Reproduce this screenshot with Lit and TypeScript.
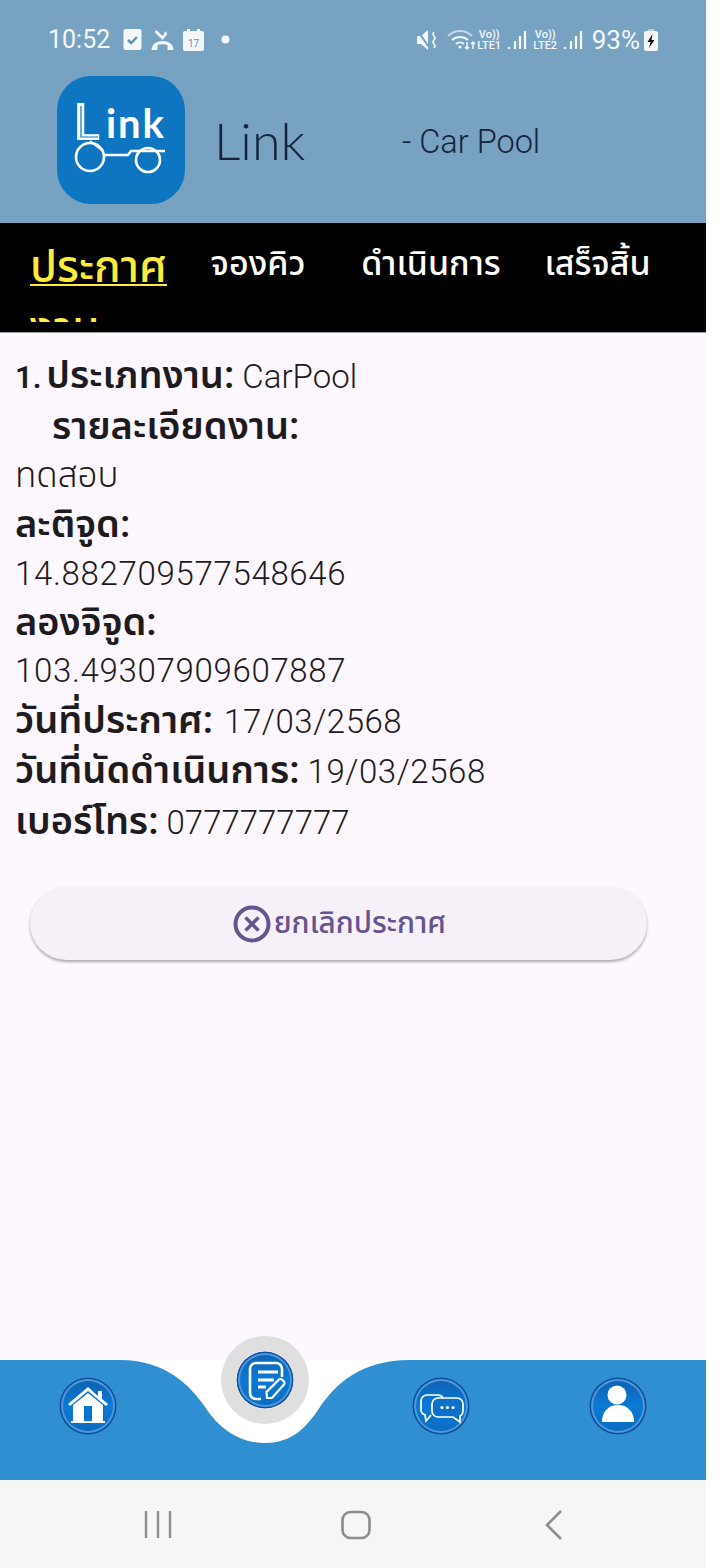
import { LitElement, html, svg, css } from "lit";
import { customElement } from "lit/decorators.js";

@customElement("app-root")
export class AppRoot extends LitElement {
  static styles = css`
    :host { display: block; width: 728px; height: 1568px; background: #fff; font-family: Roboto, "Noto Sans", "Noto Sans Thai", sans-serif; }
    .page { width: 706px; height: 1568px; display: flex; flex-direction: column; background: #fdf7ff; overflow: hidden; }
    .head { height: 223px; flex: none; background: #78a2c2; display: flex; flex-direction: column; }
    .status { height: 76px; flex: none; display: flex; align-items: center; padding: 3px 48px 0 48px; box-sizing: border-box; color: #f4f7fa; }
    .time { font-size: 25px; margin-right: 4px; font-weight: 400; }
    .sleft { display: flex; align-items: center; gap: 9px; }
    .sright { margin-left: auto; display: flex; align-items: center; }
    .pct { font-size: 26px; margin: 0 4px 0 9px; }
    .lte { display: flex; flex-direction: column; font-size: 11px; line-height: 11px; font-weight: 500; align-items: center; width: 27px; }
    .brand { display: flex; align-items: center; padding-left: 57px; }
    .logo { width: 128px; height: 128px; display: block; flex: none; }
    .name { font-size: 52px; font-weight: 300; color: #16233a; margin-left: 29px; width: 188px; font-family: Lato, Roboto, sans-serif; }
    .sub { font-size: 32.5px; font-weight: 300; color: #16233a; padding-top: 3px; }
    .tabs { height: 110px; flex: none; box-sizing: border-box; background: #000; border-bottom: 1px solid #999; display: grid; grid-template-columns: 180px 156px 190px 143px; font-weight: 500; color: #fff; font-size: 34px; }
    .tab { text-align: center; padding-top: 16px; height: 99px; overflow: hidden; box-sizing: border-box; line-height: 48px; }
    .tab.active { color: #ffeb3b; font-size: 44px; text-align: left; padding: 14px 0 0 30px; line-height: 61px; }
    .tab.active u { text-underline-offset: 2px; text-decoration-thickness: 2px; }
    main { flex: 1; padding: 17px 15px 0; color: #1d1b20; font-size: 33px; font-weight: 300; }
    .row { height: 49px; line-height: 49px; white-space: nowrap; }
    .row.first { height: 51px; line-height: 51px; }
    .row.second { height: 50px; line-height: 50px; }
    .row.short { height: 47.5px; line-height: 47.5px; }
    .row.tall { height: 50.5px; line-height: 50.5px; }
    b { font-weight: 600; font-size: 38px; }
    b .n { font-size: 31px; margin-right: -3px; }
    .th { font-size: 35px; }
    .num { letter-spacing: .68px; }
    .date { letter-spacing: .55px; }
    .date.m { margin-left: 3px; }
    .ind { padding-left: 37px; }
    .btn { margin: 41px 0 0 15px; width: 617px; height: 73px; border-radius: 37px; background: #f6f0f8; box-shadow: 0 2px 3px rgba(0,0,0,.32); display: flex; align-items: center; justify-content: center; gap: 3px; color: #65558f; font-size: 29.7px; font-weight: 500; padding-left: 2px; box-sizing: border-box; }
    .btn svg { width: 38px; height: 38px; display: block; }
    .dock { position: relative; height: 120px; flex: none; background: #fff; display: grid; grid-template-columns: repeat(4, 1fr); padding-top: 17px; box-sizing: border-box; justify-items: center; align-items: start; }
    .wave { position: absolute; left: 0; top: 0; width: 706px; height: 120px; }
    .ic { position: relative; width: 58px; height: 58px; display: block; }
    .ic.raised { margin-top: -26px; border-radius: 50%; box-shadow: 0 0 0 15px #dfdfdf; }
    .sys { height: 88px; flex: none; background: #f6f6f6; display: flex; align-items: center; }
    .sys svg { display: block; width: 706px; height: 88px; }
  `;

  private orb(inner: unknown, cls = "") {
    return html`<svg class="ic ${cls}" viewBox="0 0 58 58">
      <defs><linearGradient id="g" x1="0" y1="0" x2="0" y2="1"><stop offset="0" stop-color="#0e62b4"/><stop offset=".5" stop-color="#0a7ad6"/><stop offset="1" stop-color="#0c6cc2"/></linearGradient></defs>
      <circle cx="29" cy="29" r="28.5" fill="#0c4f9e"/>
      <circle cx="29" cy="29" r="27" fill="#4f97d8"/>
      <circle cx="29" cy="29" r="25" fill="url(#g)"/>
      ${inner}
    </svg>`;
  }

  render() {
    return html`<div class="page">
      <div class="head">
        <div class="status">
          <div class="sleft">
            <span class="time">10:52</span>
            <svg width="19" height="22" viewBox="0 0 18 22"><rect width="18" height="21" rx="2" fill="#f4f7fa"/><path d="M4.5 11l3.2 3 5.8-6" fill="none" stroke="#5f8fb0" stroke-width="2.4"/></svg>
            <svg width="23" height="22" viewBox="0 0 22 22"><path d="M4 2l7 7 4-5M15 4l-2 0" fill="none" stroke="#f4f7fa" stroke-width="2.6"/><path d="M0 21c0-12 22-12 22 0h-6v-5c-3-1-7-1-10 0v5z" fill="#f4f7fa"/></svg>
            <svg width="21" height="22" viewBox="0 0 21 22"><rect y="2" width="21" height="20" rx="2" fill="#f4f7fa"/><rect x="4" y="0" width="3" height="5" fill="#f4f7fa"/><rect x="14" y="0" width="3" height="5" fill="#f4f7fa"/><text x="10.5" y="18" font-size="10" text-anchor="middle" fill="#5f8fb0" font-family="Roboto">17</text></svg>
            <svg style="margin-left:8px" width="9" height="9" viewBox="0 0 9 9"><circle cx="4.5" cy="4.5" r="4" fill="#f4f7fa"/></svg>
          </div>
          <div class="sright">
            <svg width="22" height="22" viewBox="0 0 22 22"><path d="M1 7h4l7-6v20l-7-6H1z" fill="#f4f7fa"/><path d="M1 1l14 20" stroke="#78a2c2" stroke-width="2"/><path d="M18 3q-2 2 0 4t0 4 0 4 0 4" fill="none" stroke="#f4f7fa" stroke-width="1.6"/></svg>
            <svg style="margin-left:9px" width="29" height="22" viewBox="0 0 29 22"><path d="M1 7a17 17 0 0 1 24 0" fill="none" stroke="#c6d7e4" stroke-width="2"/><path d="M5 11a12 12 0 0 1 16 0M9 15a6 6 0 0 1 8 0" fill="none" stroke="#f4f7fa" stroke-width="2"/><circle cx="13" cy="18" r="1.6" fill="#f4f7fa"/><path d="M20 13v7m-2-2 2 2 2-2M26 20v-7m-2 2 2-2 2 2" fill="none" stroke="#f4f7fa" stroke-width="1.5"/></svg>
            <span class="lte"><span>Vo))</span><span>LTE1</span></span>
            <svg style="margin:0 0 0 4px" width="20" height="20" viewBox="0 0 20 20"><path d="M2 17v2M8 11v8M13 6v13M18 1v18" stroke="#f4f7fa" stroke-width="2.2"/></svg>
            <span class="lte" style="margin-left:5px"><span>Vo))</span><span>LTE2</span></span>
            <svg style="margin:0 0 0 4px" width="20" height="20" viewBox="0 0 20 20"><path d="M2 17v2M8 11v8M13 6v13M18 1v18" stroke="#f4f7fa" stroke-width="2.2"/></svg>
            <span class="pct">93%</span>
            <svg width="14" height="22" viewBox="0 0 14 22"><rect x="4" y="0" width="6" height="3" fill="#b9cddc"/><rect y="2" width="14" height="20" rx="2.5" fill="#f4f7fa"/><path d="M8.5 5 3.5 13h3l-1.5 6 5.5-8h-3z" fill="#111"/></svg>
          </div>
        </div>
        <div class="brand">
          <svg class="logo" viewBox="0 0 128 128">
            <rect width="128" height="128" rx="34" fill="#0e76c0"/>
            <text x="16" y="64" font-size="52" font-family="Lato, Roboto, sans-serif" font-weight="700" fill="#fff">L</text>
            <path d="M24 30v31h17" stroke="#0e76c0" stroke-width="1.2" fill="none"/>
            <text x="49" y="62" font-size="40" font-family="Lato, Roboto, sans-serif" font-weight="700" fill="#fff" textLength="58">ink</text>
            <path d="M33 65l13 10" stroke="#fff" stroke-width="2" fill="none"/>
            <circle cx="33" cy="81" r="14" fill="none" stroke="#fff" stroke-width="2.6"/>
            <circle cx="91" cy="84" r="12" fill="none" stroke="#fff" stroke-width="2.6"/>
            <path d="M47 79h24l3-4h34" stroke="#fff" stroke-width="2.6" fill="none"/>
          </svg>
          <span class="name">Link</span>
          <span class="sub">- Car Pool</span>
        </div>
      </div>
      <nav class="tabs">
        <div class="tab active"><u>ประกาศ</u><br />งาน</div>
        <div class="tab">จองคิว</div>
        <div class="tab">ดำเนินการ</div>
        <div class="tab">เสร็จสิ้น</div>
      </nav>
      <main>
        <div class="row first"><b><span class="n">1. </span>ประเภทงาน:</b> CarPool</div>
        <div class="row second"><b class="ind">รายละเอียดงาน:</b></div>
        <div class="row th">ทดสอบ</div>
        <div class="row"><b>ละติจูด:</b></div>
        <div class="row num">14.882709577548646</div>
        <div class="row"><b>ลองจิจูด:</b></div>
        <div class="row short num">103.49307909607887</div>
        <div class="row tall"><b>วันที่ประกาศ:</b> <span class="date m">17/03/2568</span></div>
        <div class="row tall"><b>วันที่นัดดำเนินการ:</b> <span class="date">19/03/2568</span></div>
        <div class="row tall"><b>เบอร์โทร:</b> 0777777777</div>
        <div class="btn">
          <svg viewBox="0 0 38 38"><circle cx="19" cy="19" r="16.5" fill="none" stroke="#65558f" stroke-width="4"/><path d="M12.5 12.5l13 13m0-13-13 13" stroke="#65558f" stroke-width="3.4"/></svg>
          <span>ยกเลิกประกาศ</span>
        </div>
      </main>
      <div class="dock">
        <svg class="wave" viewBox="0 0 706 120"><path d="M0 0H120C165 0 190 25 205 47C220 70 240 83 265 83C290 83 305 70 320 47C335 25 360 0 410 0H706V120H0Z" fill="#2f8fd0"/></svg>
        ${this.orb(svg`<path d="M29 10 9 27l2 2 18-15 18 15 2-2-6-5v-8h-4v5z" fill="#fff"/><path d="M14 28 29 16l15 12v16H33V29h-8v15H14z" fill="#fff"/><rect x="12" y="44" width="34" height="2" fill="#fff"/>`)}
        ${this.orb(svg`<path d="M46 26v-8a6 6 0 0 0-6-6H20a6 6 0 0 0-6 6v24a6 6 0 0 0 6 6h5" fill="none" stroke="#fff" stroke-width="2.6"/><path d="M22 21h20M22 29h16M22 36h8" stroke="#fff" stroke-width="2.8"/><path d="M31 47l-.5-6 12-12a2.5 2.5 0 0 1 4 0l1 1a2.5 2.5 0 0 1 0 4L36 47z" fill="none" stroke="#fff" stroke-width="2.2"/>`, "raised")}
        ${this.orb(svg`<path d="M31 21c-1-2-3-3-5-3H15a6 6 0 0 0-6 6v8a6 6 0 0 0 4 6l1 6 5-6" fill="none" stroke="#fff" stroke-width="1.7"/><path d="M26 21h19a6 6 0 0 1 6 6v7a6 6 0 0 1-3 5v6l-7-5H26a6 6 0 0 1-6-6v-7a6 6 0 0 1 6-6z" fill="#0a70c8" stroke="#fff" stroke-width="1.7"/><circle cx="30" cy="30.5" r="1.6" fill="#fff"/><circle cx="35.5" cy="30.5" r="1.6" fill="#fff"/><circle cx="41" cy="30.5" r="1.6" fill="#fff"/>`)}
        ${this.orb(svg`<circle cx="28" cy="18" r="9.5" fill="#fff"/><path d="M13 45c0-11 7-17 16-17s16 6 16 17z" fill="#fff"/>`)}
      </div>
      <div class="sys">
        <svg viewBox="0 0 706 88">
          <path d="M146 31v27M158 31v27M170 31v27" stroke="#8d8d8d" stroke-width="2.4"/>
          <rect x="342.5" y="32" width="27" height="26" rx="8" fill="none" stroke="#8d8d8d" stroke-width="2.6"/>
          <path d="M561 31 547 45l14 14" fill="none" stroke="#8d8d8d" stroke-width="2.6"/>
        </svg>
      </div>
    </div>`;
  }
}
